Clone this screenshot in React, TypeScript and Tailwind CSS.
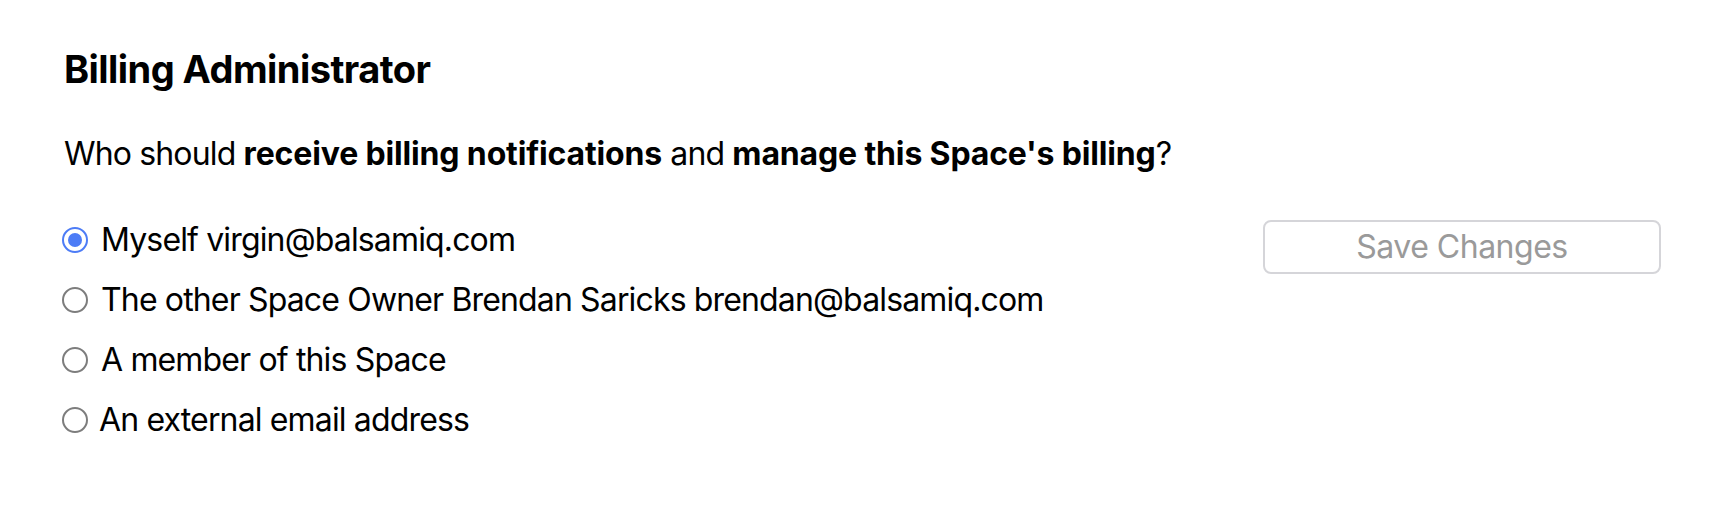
import { useState } from "react"

const options = [
  { id: "me", label: "Myself virgin@balsamiq.com" },
  { id: "owner", label: "The other Space Owner Brendan Saricks brendan@balsamiq.com" },
  { id: "member", label: "A member of this Space" },
  { id: "external", label: "An external email address" },
]

function Radio({ checked }: { checked: boolean }) {
  if (checked) {
    return (
      <span className="w-[26px] h-[26px] shrink-0 rounded-full border-2 border-[#4d7cf6] flex items-center justify-center">
        <span className="w-[14px] h-[14px] rounded-full bg-[#4d7cf6]" />
      </span>
    )
  }
  return <span className="w-[26px] h-[26px] shrink-0 rounded-full border-2 border-[#7d7d7d] bg-white" />
}

export default function App() {
  const [selected, setSelected] = useState("me")

  return (
    <div
      className="min-h-[516px] bg-white text-black pl-16 pr-[53px] pt-[47px]"
      style={{ fontFamily: "Inter, 'Liberation Sans', sans-serif" }}
    >
      <h2 className="text-[38px] leading-[44px] font-bold tracking-[-0.55px]">Billing Administrator</h2>

      <p className="mt-[43px] text-[32px] leading-[40px] tracking-[-0.85px]">
        Who should <b className="font-bold tracking-[-0.15px]">receive billing notifications</b> and{" "}
        <b className="font-bold tracking-[-0.15px]">manage this Space's billing</b>?
      </p>

      <div className="mt-[36px] flex justify-between items-start">
        <div className="flex flex-col -ml-[2px]">
          {options.map((o) => (
            <label
              key={o.id}
              className="h-[60px] flex items-center gap-[13px] text-[32px] tracking-[-0.85px] cursor-pointer"
              onClick={() => setSelected(o.id)}
            >
              <Radio checked={selected === o.id} />
              <span className={o.id === "external" ? "-ml-[2px]" : ""}>{o.label}</span>
            </label>
          ))}
        </div>

        <button
          type="button"
          disabled
          className="mt-[10px] w-[398px] h-[54px] rounded-[8px] border-2 border-[#d5d5d9] bg-white text-[32px] tracking-[-0.5px] text-[#9a9a9a]"
        >
          Save Changes
        </button>
      </div>
    </div>
  )
}
